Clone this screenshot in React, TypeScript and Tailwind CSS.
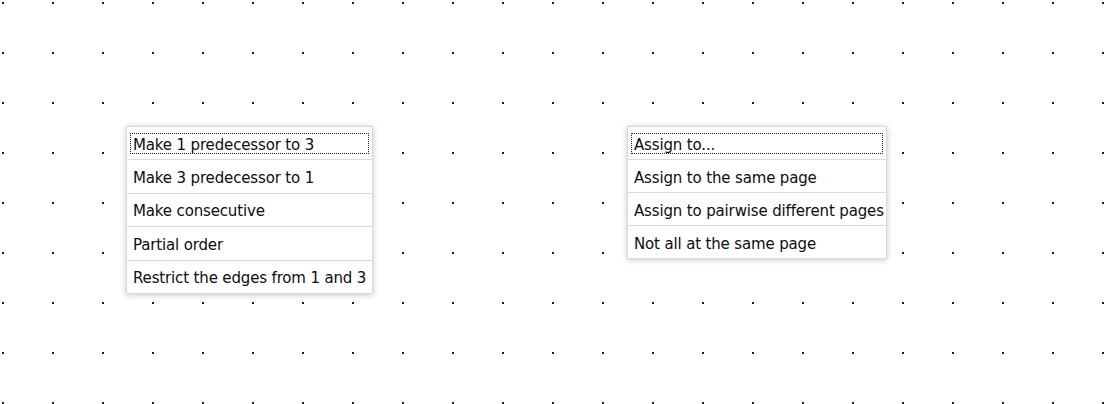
import React from 'react';

const leftItems = [
  'Make 1 predecessor to 3',
  'Make 3 predecessor to 1',
  'Make consecutive',
  'Partial order',
  'Restrict the edges from 1 and 3',
];

const rightItems = [
  'Assign to...',
  'Assign to the same page',
  'Assign to pairwise different pages',
  'Not all at the same page',
];

function DotGrid() {
  return (
    <svg className="absolute inset-0" width="1110" height="404">
      <defs>
        <pattern id="dots" x="0" y="0" width="50" height="50" patternUnits="userSpaceOnUse">
          <rect x="2" y="2" width="2" height="2" fill="#1e1e1e" />
        </pattern>
      </defs>
      <rect width="1110" height="404" fill="url(#dots)" />
    </svg>
  );
}

function Menu({
  items,
  rowHeight,
  className,
}: {
  items: string[];
  rowHeight: string;
  className: string;
}) {
  return (
    <div
      className={`absolute bg-white border border-[#d9d9d9] shadow-[0_1px_6px_rgba(0,0,0,0.22)] ${className}`}
    >
      {items.map((label, i) => (
        <div
          key={label}
          className={`flex items-center px-[3px] ${i > 0 ? `border-t border-[#dadada] ${rowHeight}` : 'h-[32px]'}`}
        >
          <div
            className={`flex-1 h-[21px] pt-[3px] px-[2px] ${
              i === 0 ? 'border border-dotted border-[#222]' : 'border border-transparent'
            }`}
          >
            <div className="text-[15px] leading-[16px] text-[#0d0d0d] whitespace-nowrap tracking-[-0.15px] font-['DejaVu_Sans',sans-serif]">
              {label}
            </div>
          </div>
        </div>
      ))}
    </div>
  );
}

export default function App() {
  return (
    <div className="relative w-[1110px] h-[404px] bg-white overflow-hidden">
      <DotGrid />
      <Menu items={leftItems} rowHeight="h-[33.5px]" className="left-[126px] top-[126px] w-[247px]" />
      <Menu items={rightItems} rowHeight="h-[33px]" className="left-[627px] top-[126px] w-[260px]" />
    </div>
  );
}
